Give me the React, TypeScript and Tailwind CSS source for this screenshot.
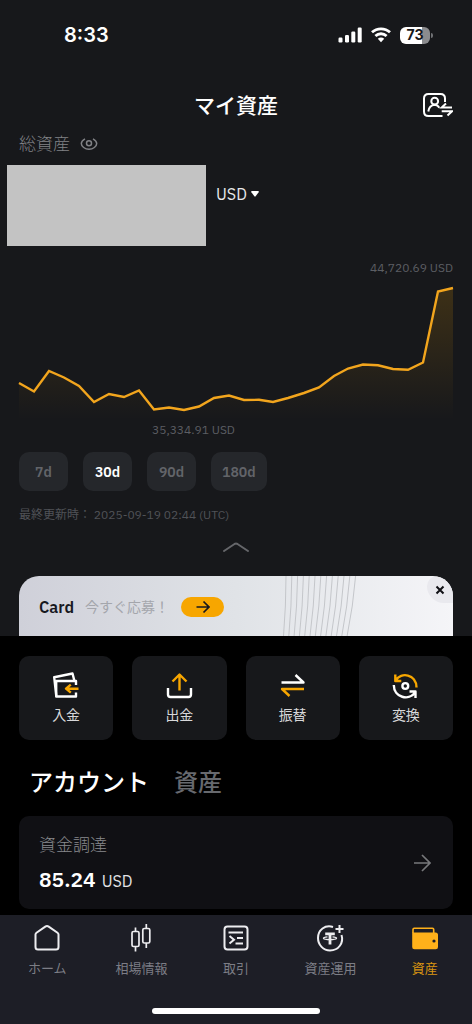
import React from "react";

const ranges = ["7d", "30d", "90d", "180d"];

const points = "19,383 34,391.5 49,371 64,377.5 79,386 94,402 109,394 124,397 139,390.5 154,409.5 169,407.5 184,410 199,406.5 214,398 229,395.5 244,400 259,399.8 273,402 288,398 304,393 319,387.5 334,376 348,368.5 363,364.5 378,365.3 393,369 408,369.8 423,362.5 438,291.5 453,288";

function StatusBar() {
  return (
    <div className="flex h-[70px] items-center justify-between pl-16 pr-[39px] text-white">
      <time className="text-xl font-semibold leading-7 font-['Inter',sans-serif]">8:33</time>
      <div className="flex items-center gap-[9px]">
        <svg width="24" height="16" viewBox="0 0 24 16" fill="currentColor" aria-hidden="true">
          <rect x="0.5" y="10.5" width="4" height="5" rx="1.2" />
          <rect x="7" y="8" width="4" height="7.500" rx="1.2" />
          <rect x="13.300" y="4.500" width="4" height="11" rx="1.2" />
          <rect x="19.700" y="0.500" width="4" height="15" rx="1.2" />
        </svg>
        <svg width="20" height="16" viewBox="0 0 20 16" fill="none" stroke="currentColor" strokeWidth="2.800" aria-hidden="true">
          <path d="M1 5.300C6 .6 14 .6 19 5.300" />
          <path d="M4.400 9C7.600 6 12.400 6 15.600 9" />
          <path d="M6.800 11.700C8.600 10.100 11.400 10.100 13.200 11.700L10 15.200Z" fill="currentColor" stroke="none" />
        </svg>
        <div className="flex items-center gap-px">
          <div className="flex h-[17px] w-[30px] items-center justify-center rounded-[6px] bg-linear-to-r from-white from-73% to-[#8b8b8e] to-73% text-sm font-bold leading-4 text-[#17181b] font-['Inter',sans-serif]">73</div>
          <div className="h-[5px] w-[2px] rounded-r-full bg-[#707174]" />
        </div>
      </div>
    </div>
  );
}

function AccountIcon() {
  return (
    <svg width="30" height="26" viewBox="0 0 30 26" fill="none" stroke="currentColor" strokeWidth="2" aria-hidden="true">
      <path d="M22 10V6.500Q22 2 17.500 2H5.500Q1 2 1 6.500V19.500Q1 24 5.500 24H19.500" />
      <circle cx="11.700" cy="9.200" r="3.400" />
      <path d="M5.300 19.500C5.800 15.600 8.200 13 11.700 12.700C14 13 15.400 14 16.400 15.700" />
      <path d="M29 15.500H18.700L23 11.500M18.700 19.300H29L24.500 23.500" />
    </svg>
  );
}

function EyeIcon() {
  return (
    <svg width="18" height="14" viewBox="0 0 18 14" fill="none" stroke="currentColor" strokeWidth="1.500" aria-hidden="true">
      <path d="M5 1.800C2.800 3 1.300 5 1.300 6.600C1.300 9.500 5 12.200 9 12.200S16.700 9.500 16.700 6.600C16.700 5 15.200 3 13 1.800" />
      <circle cx="9" cy="6.300" r="2.500" />
    </svg>
  );
}

function Chart() {
  return (
    <svg className="block h-[139px] w-full" viewBox="19 282 434 139" preserveAspectRatio="none" role="img" aria-label="30d" overflow="visible">
      <defs>
        <linearGradient id="area" x1="0" y1="288" x2="0" y2="420" gradientUnits="userSpaceOnUse">
          <stop offset="0" stopColor="#f7a600" stopOpacity="0.170" />
          <stop offset="1" stopColor="#f7a600" stopOpacity="0" />
        </linearGradient>
      </defs>
      <polygon points={points + " 453,421 19,421"} fill="url(#area)" />
      <polyline points={points} fill="none" stroke="#f2a51d" strokeWidth="2.400" />
    </svg>
  );
}

function PromoCard() {
  return (
    <section className="relative flex h-[60px] items-center overflow-hidden rounded-t-[20px] bg-linear-to-r from-[#cfd0d9] via-[#e0e3e7] to-[#f5f5f8] px-5 pt-[2px]">
      <svg className="absolute left-[264px] top-0" width="76" height="60" viewBox="0 0 76 60" fill="none" stroke="#c4c6ca" strokeWidth="1" aria-hidden="true">
        {[0, 1, 2, 3, 4, 5, 6, 7, 8, 9, 10, 11, 12].map((i) => (
          <path key={i} d={`M${3 + i * 5.800} 0Q${3 + i * 5.600} 30 ${0.500 + i * 5.300} 60`} />
        ))}
      </svg>
      <strong className="text-base font-semibold leading-6 text-[#17181e]">Card</strong>
      <span className="ml-[11px] text-sm leading-6 text-[#a4a6ac]">今すぐ応募！</span>
      <button aria-label="Card" className="ml-3 flex h-5 w-[43px] items-center justify-center rounded-full bg-[#f7a600] text-[#17181e]">
        <svg width="14" height="14" viewBox="0 0 14 14" fill="none" stroke="currentColor" strokeWidth="1.700" aria-hidden="true">
          <path d="M.5 7H13M7.500 1.500L13 7L7.500 12.500" />
        </svg>
      </button>
      <button aria-label="閉じる" className="absolute right-0 top-0 flex h-[27px] w-[26px] items-center justify-center rounded-bl-[20px] rounded-tl-[12px] bg-[#e9e9ee] text-[#101014]">
        <svg width="10" height="10" viewBox="0 0 10 10" fill="none" stroke="currentColor" strokeWidth="2" aria-hidden="true">
          <path d="M1.500 1.500L8.500 8.500M8.500 1.500L1.500 8.500" />
        </svg>
      </button>
    </section>
  );
}

const actions = [
  {
    label: "入金",
    icon: (
      <>
        <path d="M3.300 24L1.200 5.200L19.500 1.500L21.300 8.500" />
        <path d="M23 13V9H3.200V24.500H23V20.500" />
        <path stroke="#f7a600" d="M25.500 16.700H13.500M17.800 12.700L13 16.700L17.800 20.700" />
      </>
    ),
  },
  {
    label: "出金",
    icon: (
      <>
        <path d="M2 16V22.500Q2 25 4.500 25H22.500Q25 25 25 22.500V16" />
        <path stroke="#f7a600" d="M13.500 18.500V3M6.500 9.500L13.500 2.500L20.500 9.500" />
      </>
    ),
  },
  {
    label: "振替",
    icon: (
      <>
        <path d="M2.500 10.500H24.500L16.500 3" />
        <path stroke="#f7a600" d="M25 17H3L10.500 24" />
      </>
    ),
  },
  {
    label: "変換",
    icon: (
      <>
        <path stroke="#f7a600" d="M3.300 2.500V9H9.300M4 8.500C8.500-.5 24.500 2 24.500 15.500" />
        <path d="M1.800 13C1.800 25.500 17 29.500 23.500 20M17.500 19.500H23.500V26" />
        <circle cx="13.300" cy="14" r="2.900" />
      </>
    ),
  },
];

const navItems = [
  {
    label: "ホーム",
    icon: <path strokeWidth="2" d="M2.500 9.500Q2.500 8.500 3.500 7.700L12.300 1.600Q14 .4 15.700 1.600L24.500 7.700Q25.500 8.500 25.500 9.500V22Q25.500 24.500 23 24.500H5Q2.500 24.500 2.500 22Z" />,
  },
  {
    label: "相場情報",
    icon: (
      <>
        <path d="M7.500 2.500V6.500M7.500 21.500V26.500M18.300 -1V3.500M18.300 18V23" />
        <rect x="4" y="6.500" width="7" height="15" rx="1.500" />
        <rect x="14.800" y="3.500" width="7" height="14.500" rx="1.500" />
      </>
    ),
  },
  {
    label: "取引",
    icon: (
      <>
        <rect x="2.500" y="1.500" width="23" height="23" rx="3" strokeWidth="2" />
        <path strokeWidth="2" d="M6.500 7.500H21M15 13H21M13.500 18.500H21M7.500 11L12 14.700L7.500 18.500" />
      </>
    ),
  },
  {
    label: "資産運用",
    icon: (
      <>
        <path strokeWidth="2" d="M17 2C9-.5 2 5 2 13C2 20 7.500 25.500 14 25.500C22.500 25.500 28 18 25.500 10M23.500 0V8M19.500 4H27.500" />
        <path strokeWidth="2.800" d="M9.200 8.800H18.800M14 8.800V19.500" />
        <path strokeWidth="1.200" d="M11.500 11.800C5.500 12.400 6 14.600 14 14.600S22.500 12.400 16.500 11.800" />
      </>
    ),
  },
  {
    label: "資産",
    icon: (
      <>
        <path d="M2 8V4.500Q2 3.300 3.200 3.300H21.500Q22.700 3.300 22.700 4.500V8" strokeWidth="1.600" />
        <path d="M1.200 7.500H24.500Q27 7.500 27 10V22Q27 24.300 24.700 24.300H3.500Q1.200 24.300 1.200 22Z" fill="currentColor" stroke="none" />
        <circle cx="23" cy="16" r="1.600" fill="#1d1e26" stroke="none" />
      </>
    ),
  },
];

export default function App() {
  return (
    <div className="flex min-h-screen flex-col bg-black text-white font-['IBM_Plex_Sans','Noto_Sans','Noto_Sans_CJK_JP',sans-serif]">
      <div className="bg-[#17181b]">
        <StatusBar />
        <header className="grid h-[62px] grid-cols-[1fr_auto_1fr] items-center px-[19px] pt-2">
          <h1 className="col-start-2 text-[21px] font-medium leading-8">マイ資産</h1>
          <button aria-label="アカウント" className="justify-self-end">
            <AccountIcon />
          </button>
        </header>

        <main>
          <div className="flex h-6 items-center gap-[10px] px-[19px] text-[#818286]">
            <h2 className="text-[17px] font-light leading-6">総資産</h2>
            <button aria-label="表示">
              <EyeIcon />
            </button>
          </div>
          <div className="mt-[9px] flex items-start gap-[10px] pl-[7px]">
            <div className="h-[81px] w-[199px] bg-[#c3c3c3]" />
            <button className="mt-[17px] flex items-center gap-1 text-base leading-6 text-[#e8e8ea]">
              USD
              <svg width="8" height="6" viewBox="0 0 8 6" fill="white" aria-hidden="true">
                <path d="M.8 0H7.200Q8.200 .3 7.600 1.200L4.600 5.300Q4 6 3.400 5.300L.4 1.200Q-.2 .3.8 0" />
              </svg>
            </button>
          </div>

          <div className="mt-[13px] px-[19px] text-xs leading-[18px] text-[#5c5e63]">
            <p className="text-right">44,720.69 USD</p>
            <div className="mt-[5px]">
              <Chart />
            </div>
            <p className="ml-[133px]">35,334.91 USD</p>
          </div>

          <div className="mt-[13px] flex gap-[15px] px-[19px]">
            {ranges.map((range) => (
              <button
                key={range}
                aria-pressed={range === "30d"}
                className={`h-[39px] min-w-[49px] rounded-[10px] bg-[#25272b] px-[11px] text-sm font-semibold leading-5 ${range === "30d" ? "text-white" : "text-[#626469]"}`}
              >
                {range}
              </button>
            ))}
          </div>
          <p className="mt-[15px] px-[19px] text-xs leading-[18px] text-[#505257]">最終更新時： 2025-09-19 02:44 (UTC)</p>
          <button aria-label="折りたたむ" className="mx-auto mt-[17px] block text-[#65666a]">
            <svg width="26" height="12" viewBox="0 0 26 12" fill="none" stroke="currentColor" strokeWidth="2" strokeLinecap="round" aria-hidden="true">
              <path d="M1 10L11.500 3Q13 2.200 14.500 3L25 10" />
            </svg>
          </button>
          <div className="mt-[23px] px-[19px]">
            <PromoCard />
          </div>
        </main>
      </div>

      <section className="flex-1 px-[19px] pt-5">
        <div className="grid grid-cols-4 gap-[19px]">
          {actions.map((action) => (
            <button key={action.label} className="flex h-[84px] flex-col items-center gap-[6px] rounded-[10px] bg-[#17181b] pt-4 text-sm leading-5 text-[#d8d8da]">
              <svg className="text-white" width="27" height="27" viewBox="0 0 27 27" fill="none" stroke="currentColor" strokeWidth="2.400" strokeLinejoin="round" aria-hidden="true">
                {action.icon}
              </svg>
              {action.label}
            </button>
          ))}
        </div>

        <div role="tablist" className="mt-6 flex h-9 items-center gap-[25px] pl-[10px] text-2xl font-medium leading-9">
          <button role="tab" aria-selected="true">アカウント</button>
          <button role="tab" aria-selected="false" className="text-[#67696e]">資産</button>
        </div>

        <a href="#funding" className="mt-4 flex h-[93px] items-center justify-between rounded-[10px] bg-[#101014] px-5">
          <span>
            <span className="block text-[17px] font-light leading-6 text-[#88898d]">資金調達</span>
            <span className="mt-2 flex items-baseline gap-[6px] leading-7">
              <strong className="text-[21px] font-semibold">85.24</strong>
              <span className="text-base text-[#e2e2e4]">USD</span>
            </span>
          </span>
          <svg className="mr-[2px]" width="17" height="18" viewBox="0 0 17 18" fill="none" stroke="#77787b" strokeWidth="1.700" aria-hidden="true">
            <path d="M0 9H16M8 1L16 9L8 17" />
          </svg>
        </a>
      </section>

      <nav className="mt-[6px] flex h-[109px] flex-col justify-between bg-[#1d1e26] pb-[10px] pt-[10px]">
        <div className="grid grid-cols-5">
          {navItems.map((item) => (
            <a
              key={item.label}
              href={`#${item.label}`}
              aria-current={item.label === "資産" ? "page" : undefined}
              className={`flex flex-col items-center gap-[7px] text-[13px] leading-5 ${item.label === "資産" ? "text-[#d99411]" : "text-[#7c7d85]"}`}
            >
              <svg className={item.label === "資産" ? "text-[#ffb11a]" : "text-[#ededf0]"} width="28" height="27" viewBox="0 0 28 27" overflow="visible" fill="none" stroke="currentColor" strokeWidth="1.700" aria-hidden="true">
                {item.icon}
              </svg>
              {item.label}
            </a>
          ))}
        </div>
        <div className="mx-auto h-[6px] w-[168px] rounded-full bg-white" />
      </nav>
    </div>
  );
}
